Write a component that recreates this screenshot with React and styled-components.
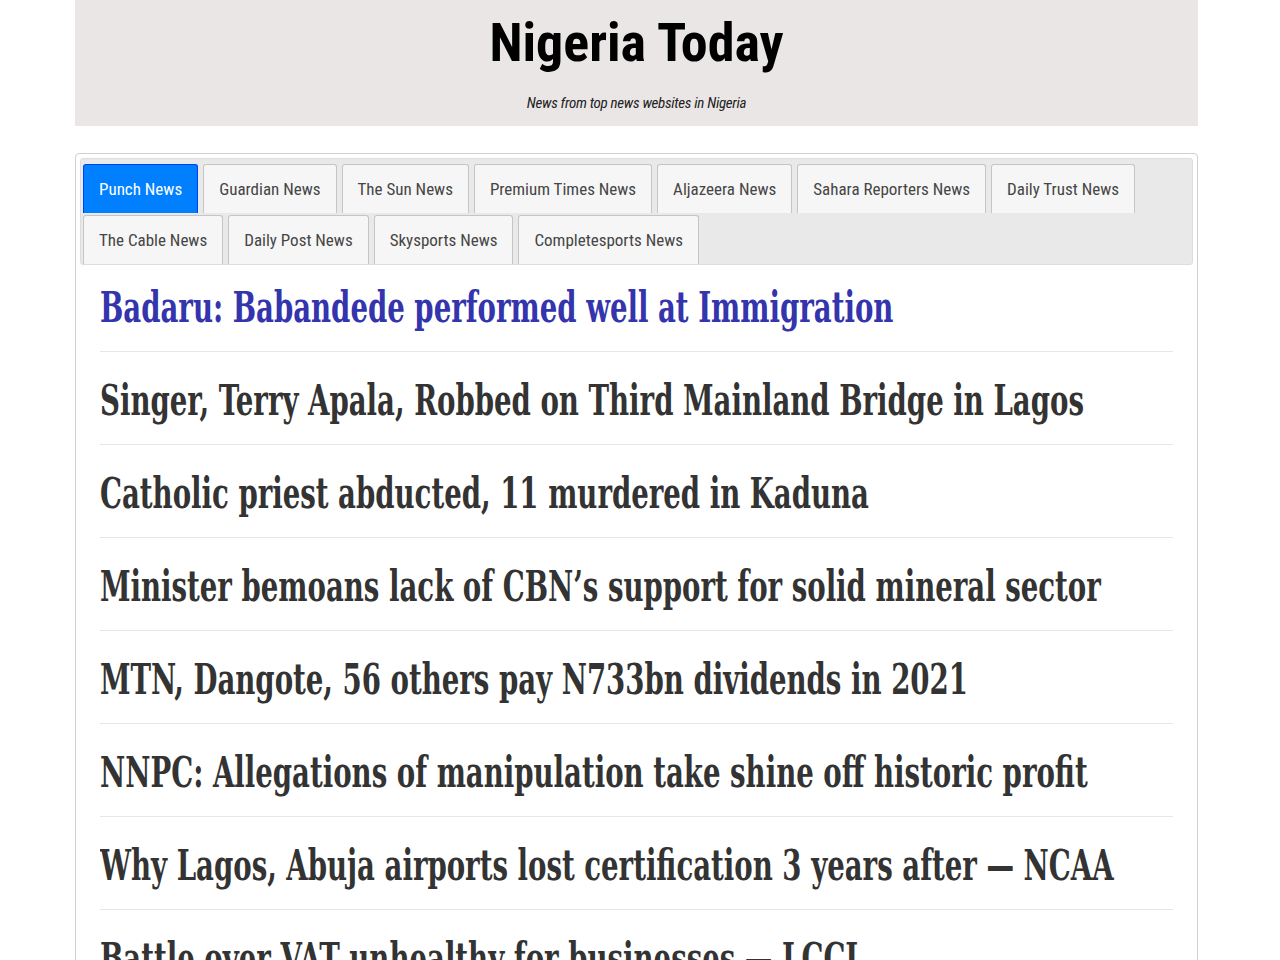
import styled, { createGlobalStyle } from "styled-components";

const GlobalStyle = createGlobalStyle`
  body {
    margin: 0;
    background: #ffffff;
    font-family: "Roboto Condensed", "Liberation Sans", sans-serif;
  }
`;

const Page = styled.div`
  width: 1123px;
  margin-left: 75px;
`;

const Header = styled.header`
  height: 126px;
  background-color: #eae6e5;
  display: flex;
  flex-direction: column;
  align-items: center;
`;

const Title = styled.h1`
  margin: 16px 0 0;
  font-size: 54px;
  line-height: 54px;
  font-weight: 700;
  color: #000;
`;

const Tagline = styled.p`
  margin: 24px 0 0;
  font-size: 15px;
  line-height: 18px;
  font-style: italic;
  color: #222;
  letter-spacing: -0.3px;
`;

const Card = styled.section`
  margin-top: 27px;
  border: 1px solid #d0d0d0;
  border-radius: 4px;
  padding: 4px;
  background: #fff;
`;

const TabStrip = styled.nav`
  display: flex;
  flex-wrap: wrap;
  row-gap: 2px;
  column-gap: 5px;
  padding: 5px 2px 0;
  background-color: #e9e9e9;
  border: 1px solid #dddddd;
  border-radius: 3px;
`;

const Tab = styled.a`
  display: flex;
  align-items: center;
  height: 49px;
  box-sizing: border-box;
  padding: 0 15px;
  font-size: 17px;
  color: ${(p) => (p.$active ? "#ffffff" : "#454545")};
  background-color: ${(p) => (p.$active ? "#007fff" : "#f6f6f6")};
  border: 1px solid ${(p) => (p.$active ? "#003eff" : "#c5c5c5")};
  border-bottom: none;
  border-radius: 3px 3px 0 0;
  text-decoration: none;
  cursor: pointer;
`;

const List = styled.div`
  padding: 0 20px;
`;

const Item = styled.div`
  padding: 24px 0 18px;
  border-bottom: 1px solid #e6e6e6;
  overflow: hidden;

  &:first-child {
    padding-top: 18px;
  }
`;

const Headline = styled.a`
  display: inline-block;
  font-family: "DejaVu Serif Condensed", "DejaVu Serif", serif;
  font-weight: 700;
  font-size: 42px;
  line-height: 50px;
  white-space: nowrap;
  color: ${(p) => (p.$visited ? "#3434ad" : "#333333")};
  text-decoration: none;
  transform: scaleX(0.73);
  transform-origin: left center;
`;

const tabs = [
  "Punch News",
  "Guardian News",
  "The Sun News",
  "Premium Times News",
  "Aljazeera News",
  "Sahara Reporters News",
  "Daily Trust News",
  "The Cable News",
  "Daily Post News",
  "Skysports News",
  "Completesports News",
];

const headlines = [
  "Badaru: Babandede performed well at Immigration",
  "Singer, Terry Apala, Robbed on Third Mainland Bridge in Lagos",
  "Catholic priest abducted, 11 murdered in Kaduna",
  "Minister bemoans lack of CBN\u2019s support for solid mineral sector",
  "MTN, Dangote, 56 others pay N733bn dividends in 2021",
  "NNPC: Allegations of manipulation take shine off historic profit",
  "Why Lagos, Abuja airports lost certification 3 years after \u2014 NCAA",
  "Battle over VAT unhealthy for businesses \u2014 LCCI",
];

export default function App() {
  return (
    <>
      <GlobalStyle />
      <Page>
        <Header>
          <Title>Nigeria Today</Title>
          <Tagline>News from top news websites in Nigeria</Tagline>
        </Header>
        <Card>
          <TabStrip>
            {tabs.map((t, i) => (
              <Tab key={t} $active={i === 0}>
                {t}
              </Tab>
            ))}
          </TabStrip>
          <List>
            {headlines.map((h, i) => (
              <Item key={h}>
                <Headline $visited={i === 0}>{h}</Headline>
              </Item>
            ))}
          </List>
        </Card>
      </Page>
    </>
  );
}
